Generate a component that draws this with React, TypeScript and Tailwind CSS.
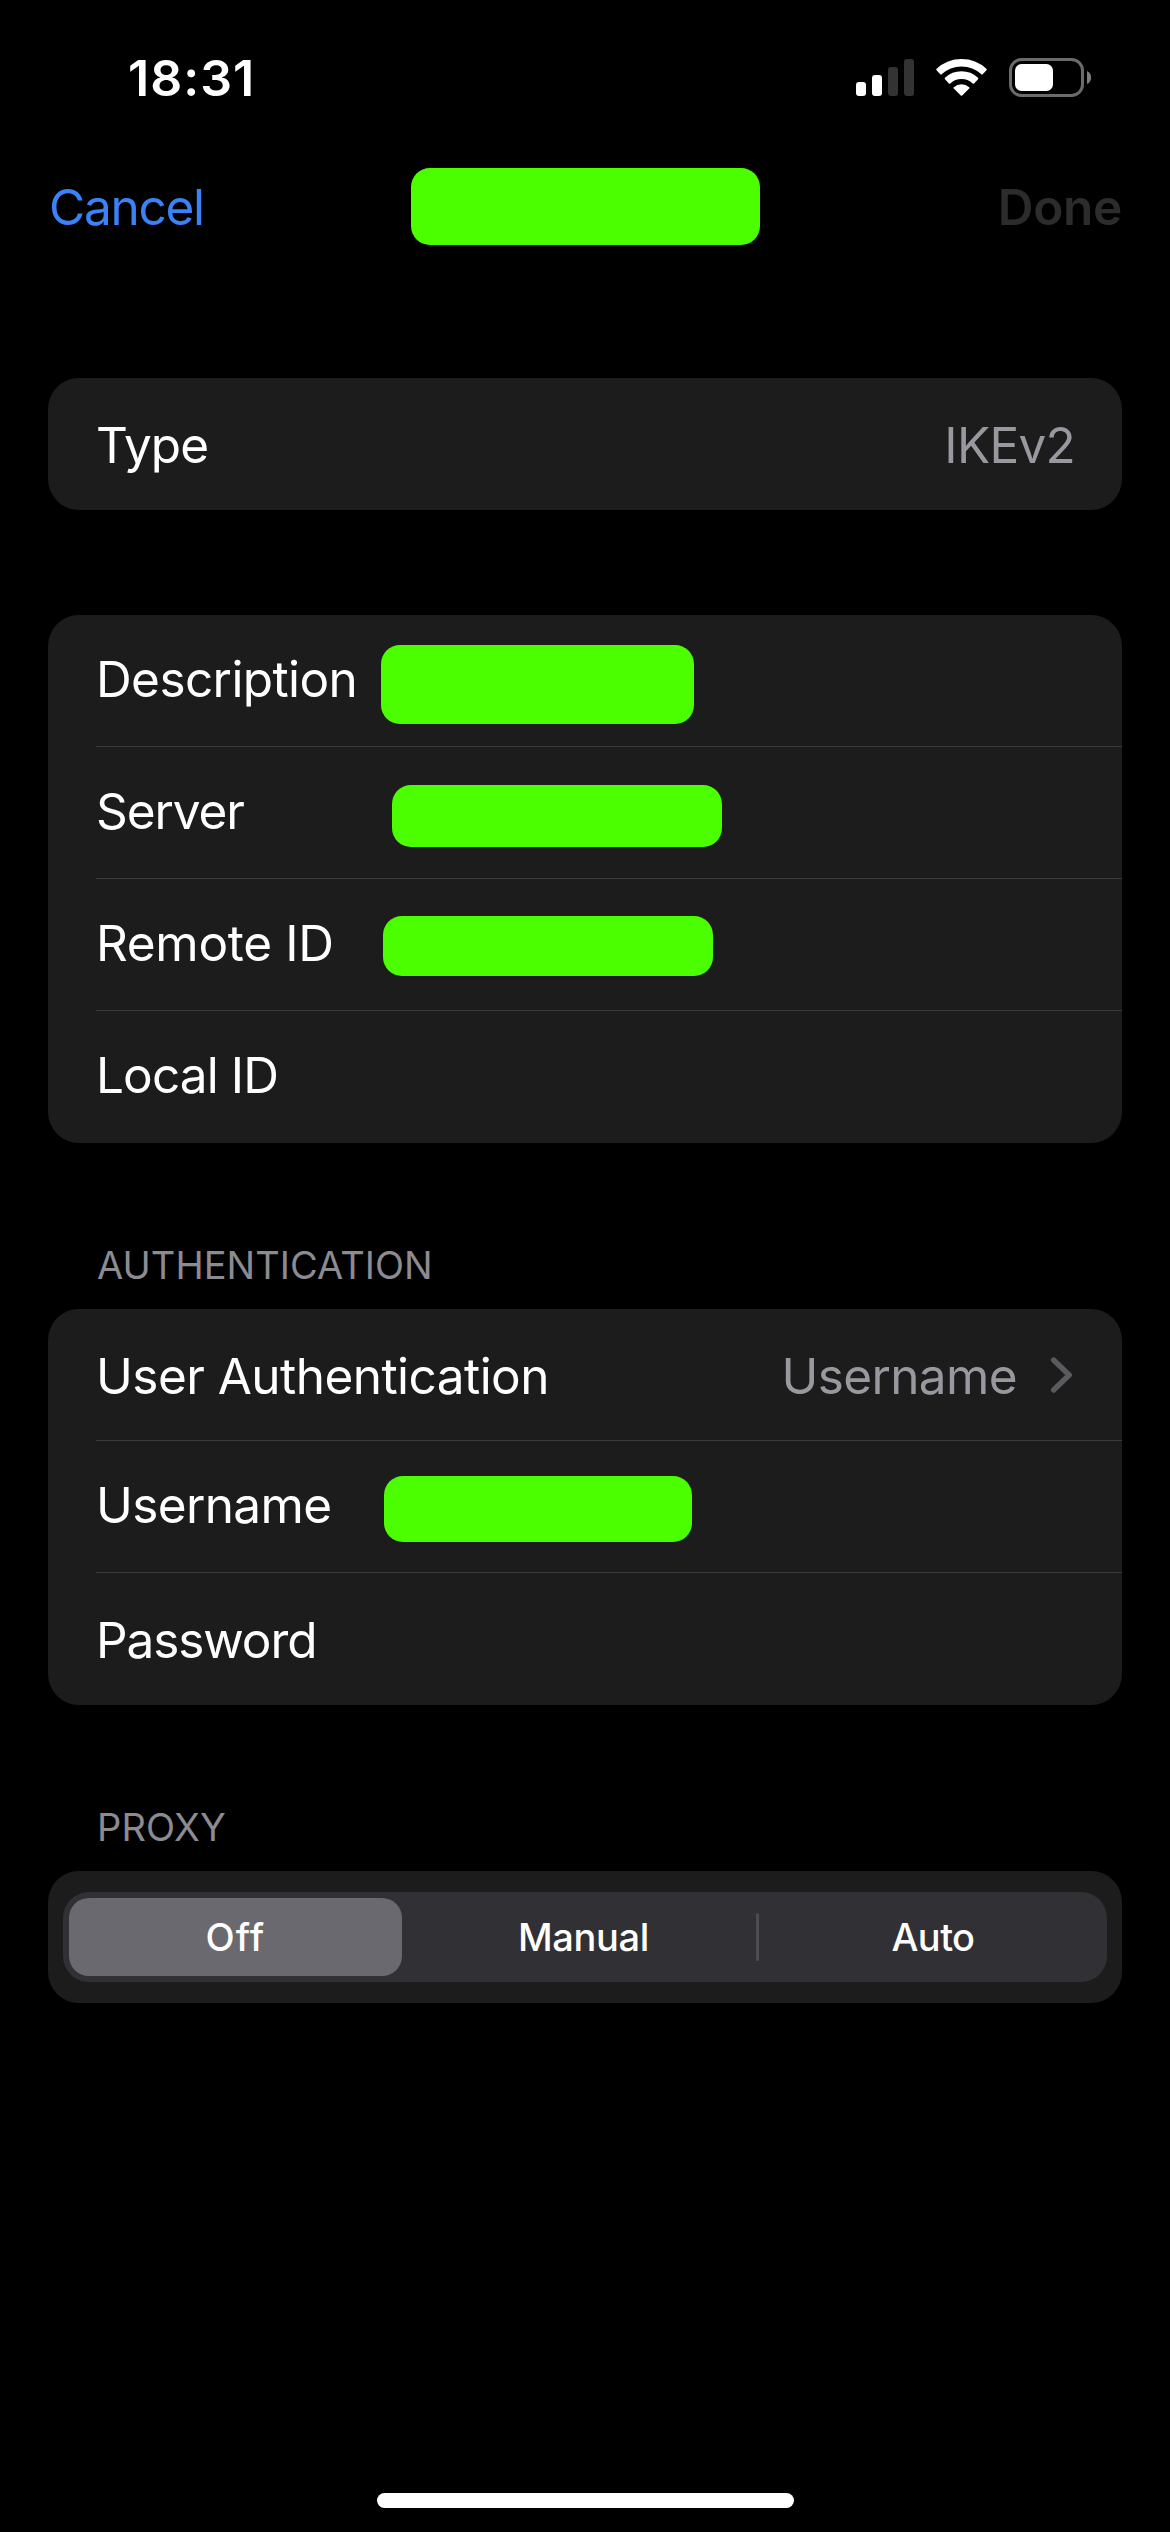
import type { ReactNode } from "react";

function SignalBars() {
  return (
    <svg width="58" height="37" viewBox="0 0 58 37">
      <rect x="0" y="23" width="10" height="14" rx="3" fill="#fff" />
      <rect x="16" y="16" width="10" height="21" rx="3" fill="#fff" />
      <rect x="32" y="8" width="10" height="29" rx="3" fill="#333" />
      <rect x="48" y="0" width="10" height="37" rx="3" fill="#333" />
    </svg>
  );
}

function Wifi() {
  return (
    <svg width="51" height="37" viewBox="0 0 51 37" fill="#fff" stroke="#fff" strokeWidth="2" strokeLinejoin="round">
      <path d="M1.3 10.55A35.5 35.5 0 0 1 49.7 10.55L46 14.6A30 30 0 0 0 5 14.6Z" />
      <path d="M9.7 19.5A23.2 23.2 0 0 1 41.3 19.5L37.4 23.7A17.5 17.5 0 0 0 13.6 23.7Z" />
      <path d="M18.5 28.9A10.3 10.3 0 0 1 32.5 28.9L25.5 35.8Z" />
    </svg>
  );
}

function Battery() {
  return (
    <svg width="82" height="39" viewBox="0 0 82 39">
      <rect x="1.5" y="1.5" width="72" height="36" rx="11" fill="none" stroke="#6b6b6b" strokeWidth="3" />
      <rect x="6" y="6" width="38" height="27" rx="6.5" fill="#fff" />
      <path d="M78 13A7.2 7.2 0 0 1 78 26Z" fill="#7d7d7d" />
    </svg>
  );
}

function Chevron() {
  return (
    <svg className="ml-[33px]" width="25" height="38" viewBox="0 0 25 38">
      <path d="M3.6 4L19.2 19L3.6 34" fill="none" stroke="#5a5a5f" strokeWidth="5.4" strokeLinecap="round" strokeLinejoin="round" />
    </svg>
  );
}

function Card({ children }: { children: ReactNode }) {
  return <section className="mx-12 overflow-hidden rounded-[31px] bg-[#1c1c1c]">{children}</section>;
}

function Row({ label, tracking, shift = "pb-[4px]", last = false, children }: {
  label: string;
  tracking: string;
  shift?: string;
  last?: boolean;
  children?: ReactNode;
}) {
  return (
    <div className={`ml-12 flex h-[132px] items-center pr-[47px] ${last ? "" : "border-b border-[#3c3c3e]"}`}>
      <span className={`min-w-[285px] whitespace-nowrap ${shift} ${tracking}`}>{label}</span>
      {children}
    </div>
  );
}

function Redacted({ className }: { className: string }) {
  return <div className={`rounded-[19px] bg-[#4cff00] ${className}`} />;
}

function Header({ children, tracking }: { children: ReactNode; tracking: string }) {
  return (
    <h2 className={`h-[166px] pt-[99px] pl-[97px] text-[38px] leading-[46px] text-[#8b8b91] ${tracking}`}>{children}</h2>
  );
}

export default function App() {
  return (
    <main className="flex h-[2532px] w-[1170px] flex-col overflow-hidden bg-black font-['Inter',sans-serif] text-[49.5px] leading-[60px] text-white">
      <div className="flex h-[168px] shrink-0 items-start justify-between pl-[128px] pr-[79px]">
        <span className="pt-12 text-[50px] font-semibold tracking-[1.02px]">18:31</span>
        <div className="flex items-center gap-[22px] pt-[58px]">
          <SignalBars />
          <Wifi />
          <Battery />
        </div>
      </div>

      <nav className="grid h-[77px] shrink-0 grid-cols-[1fr_349px_1fr] items-center pl-[49px] pr-12">
        <span className="tracking-[-1.26px] text-[#3b82f7]">Cancel</span>
        <Redacted className="h-[77px]" />
        <span className="text-right font-semibold tracking-[-0.3px] text-[#2c2c2c]">Done</span>
      </nav>

      <div className="mt-[133px] flex flex-col gap-[105px]">
        <Card>
          <Row label="Type" tracking="tracking-[-0.93px]" shift="pt-[2px]" last>
            <span className="ml-auto pt-[2px] tracking-[-0.73px] text-[#98989f]">IKEv2</span>
          </Row>
        </Card>
        <Card>
          <Row label="Description" tracking="tracking-[-0.6px]">
            <Redacted className="mt-[8px] h-[79px] w-[313px]" />
          </Row>
          <Row label="Server" tracking="tracking-[-1.12px]">
            <Redacted className="mt-[7px] ml-[11px] h-[62px] w-[330px]" />
          </Row>
          <Row label="Remote ID" tracking="tracking-[-0.31px]">
            <Redacted className="mt-[3px] ml-[2px] h-[60px] w-[330px]" />
          </Row>
          <Row label="Local ID" tracking="tracking-[-0.89px]" last />
        </Card>
      </div>

      <Header tracking="tracking-[0.04px]">AUTHENTICATION</Header>
      <Card>
        <Row label="User Authentication" tracking="tracking-[-0.54px]" shift="pt-[3px]">
          <span className="ml-auto pt-[3px] tracking-[-0.63px] text-[#98989f]">Username</span>
          <Chevron />
        </Row>
        <Row label="Username" tracking="tracking-[-0.63px]">
          <Redacted className="mt-[5px] ml-[3px] h-[66px] w-[308px]" />
        </Row>
        <Row label="Password" tracking="tracking-[-1.09px]" shift="pt-[2px]" last />
      </Card>

      <Header tracking="tracking-[0.15px]">PROXY</Header>
      <Card>
        <div className="px-[15px] py-[21px]">
          <div className="flex h-[90px] items-center rounded-[26px] bg-[#313035] text-[38px] font-medium">
            <div className="ml-[6px] flex h-[78px] w-[333px] items-center justify-center rounded-[20px] bg-[#6a696f] tracking-[1.15px]">
              Off
            </div>
            <div className="ml-[9px] w-[345px] text-center tracking-[-0.38px]">Manual</div>
            <div className="h-12 w-[3px] rounded-full bg-[#4d4c52]" />
            <div className="flex-1 text-center tracking-[-0.6px]">Auto</div>
          </div>
        </div>
      </Card>

      <div className="mx-auto mt-auto mb-6 h-[15px] w-[417px] shrink-0 rounded-full bg-white" />
    </main>
  );
}
